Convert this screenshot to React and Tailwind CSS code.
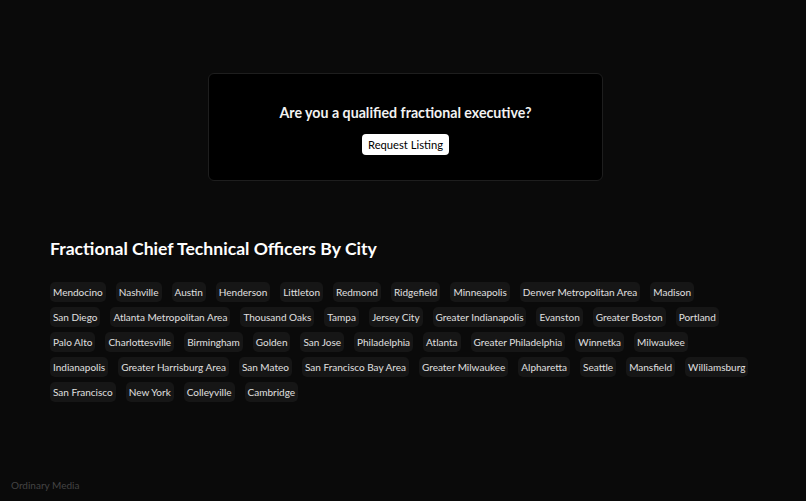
import React from 'react';

const CITIES = [
  'Mendocino', 'Nashville', 'Austin', 'Henderson', 'Littleton', 'Redmond', 'Ridgefield',
  'Minneapolis', 'Denver Metropolitan Area', 'Madison', 'San Diego', 'Atlanta Metropolitan Area',
  'Thousand Oaks', 'Tampa', 'Jersey City', 'Greater Indianapolis', 'Evanston', 'Greater Boston',
  'Portland', 'Palo Alto', 'Charlottesville', 'Birmingham', 'Golden', 'San Jose', 'Philadelphia',
  'Atlanta', 'Greater Philadelphia', 'Winnetka', 'Milwaukee', 'Indianapolis',
  'Greater Harrisburg Area', 'San Mateo', 'San Francisco Bay Area', 'Greater Milwaukee',
  'Alpharetta', 'Seattle', 'Mansfield', 'Williamsburg', 'San Francisco', 'New York',
  'Colleyville', 'Cambridge',
];

export default function App() {
  return (
    <div className="min-h-[501px] bg-[#0a0a0a] text-white font-['Lato',sans-serif] flex flex-col">
      <div className="flex justify-center pt-[73px] pl-[5px]">
        <div className="w-[395px] h-[108px] bg-black border border-[#1e1e1e] rounded-md flex flex-col items-center justify-center pt-[4px]">
          <h2 className="text-[14.2px] font-bold leading-5 text-[#f2f2f2]">Are you a qualified fractional executive?</h2>
          <button className="mt-[11px] bg-white text-black text-[11.2px] leading-[21px] px-[6px] rounded-[4px]">
            Request Listing
          </button>
        </div>
      </div>

      <div className="pl-[50px] pr-[54px] pt-[56px]">
        <h1 className="text-[17.6px] font-bold leading-6 text-white">Fractional Chief Technical Officers By City</h1>
        <div className="mt-[21px] flex flex-wrap gap-x-[10px] gap-y-[5px]">
          {CITIES.map((city) => (
            <span key={city} className="bg-[#161616] text-[#e0e0e0] text-[10px] leading-5 px-[3px] rounded-[5px]">
              {city}
            </span>
          ))}
        </div>
      </div>

      <div className="mt-auto px-[11px] pb-[8px] text-[10px] text-[#444]">Ordinary Media</div>
    </div>
  );
}
